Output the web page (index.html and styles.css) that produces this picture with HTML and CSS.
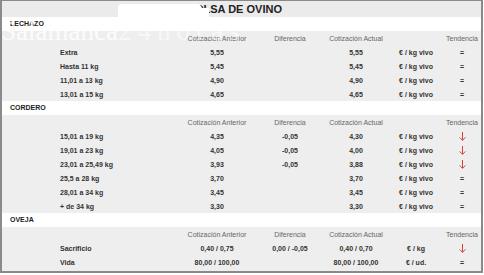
FILE: index.html
```html
<!DOCTYPE html>
<html lang="es">
<head>
<meta charset="utf-8">
<title>Bolsa de ovino</title>
<link rel="stylesheet" href="styles.css">
</head>
<body>
<div class="board">
  <div class="title">BOLSA DE OVINO</div>

  <div class="band">LECHAZO</div>
  <div class="row head"><span></span><span></span><span class="c">Cotización Anterior</span><span class="c">Diferencia</span><span class="c">Cotización Actual</span><span></span><span class="c">Tendencia</span></div>
  <div class="row"><span></span><span>Extra</span><span class="c">5,55</span><span class="c"></span><span class="c">5,55</span><span class="c">€ / kg vivo</span><span class="c">=</span></div>
  <div class="row"><span></span><span>Hasta 11 kg</span><span class="c">5,45</span><span class="c"></span><span class="c">5,45</span><span class="c">€ / kg vivo</span><span class="c">=</span></div>
  <div class="row"><span></span><span>11,01 a 13 kg</span><span class="c">4,90</span><span class="c"></span><span class="c">4,90</span><span class="c">€ / kg vivo</span><span class="c">=</span></div>
  <div class="row"><span></span><span>13,01 a 15 kg</span><span class="c">4,65</span><span class="c"></span><span class="c">4,65</span><span class="c">€ / kg vivo</span><span class="c">=</span></div>

  <div class="band">CORDERO</div>
  <div class="row head"><span></span><span></span><span class="c">Cotización Anterior</span><span class="c">Diferencia</span><span class="c">Cotización Actual</span><span></span><span class="c">Tendencia</span></div>
  <div class="row"><span></span><span>15,01 a 19 kg</span><span class="c">4,35</span><span class="c">-0,05</span><span class="c">4,30</span><span class="c">€ / kg vivo</span><span class="c"><svg class="down" viewBox="0 0 7 9" width="7" height="9"><path d="M3.5 0V8.3M0.6 5.4L3.5 8.3L6.4 5.4"/></svg></span></div>
  <div class="row"><span></span><span>19,01 a 23 kg</span><span class="c">4,05</span><span class="c">-0,05</span><span class="c">4,00</span><span class="c">€ / kg vivo</span><span class="c"><svg class="down" viewBox="0 0 7 9" width="7" height="9"><path d="M3.5 0V8.3M0.6 5.4L3.5 8.3L6.4 5.4"/></svg></span></div>
  <div class="row"><span></span><span>23,01 a 25,49 kg</span><span class="c">3,93</span><span class="c">-0,05</span><span class="c">3,88</span><span class="c">€ / kg vivo</span><span class="c"><svg class="down" viewBox="0 0 7 9" width="7" height="9"><path d="M3.5 0V8.3M0.6 5.4L3.5 8.3L6.4 5.4"/></svg></span></div>
  <div class="row"><span></span><span>25,5 a 28 kg</span><span class="c">3,70</span><span class="c"></span><span class="c">3,70</span><span class="c">€ / kg vivo</span><span class="c">=</span></div>
  <div class="row"><span></span><span>28,01 a 34 kg</span><span class="c">3,45</span><span class="c"></span><span class="c">3,45</span><span class="c">€ / kg vivo</span><span class="c">=</span></div>
  <div class="row"><span></span><span>+ de 34 kg</span><span class="c">3,30</span><span class="c"></span><span class="c">3,30</span><span class="c">€ / kg vivo</span><span class="c">=</span></div>

  <div class="band">OVEJA</div>
  <div class="row head"><span></span><span></span><span class="c">Cotización Anterior</span><span class="c">Diferencia</span><span class="c">Cotización Actual</span><span></span><span class="c">Tendencia</span></div>
  <div class="row"><span></span><span>Sacrificio</span><span class="c">0,40 / 0,75</span><span class="c">0,00 / -0,05</span><span class="c">0,40 / 0,70</span><span class="c">€ / kg</span><span class="c"><svg class="down" viewBox="0 0 7 9" width="7" height="9"><path d="M3.5 0V8.3M0.6 5.4L3.5 8.3L6.4 5.4"/></svg></span></div>
  <div class="row"><span></span><span>Vida</span><span class="c">80,00 / 100,00</span><span class="c"></span><span class="c">80,00 / 100,00</span><span class="c">€ / ud.</span><span class="c">=</span></div>

  <div class="logo-blob"></div>
  <div class="logo-tail"></div>
  <div class="watermark"><span class="wm-a">Salamanca</span><span class="wm-b">24horas</span></div>
</div>
</body>
</html>
```

FILE: styles.css
```css
html, body {
  margin: 0;
  padding: 0;
  background: #ffffff;
}

body {
  font-family: "Liberation Sans", Arial, sans-serif;
  color: #333333;
}

.board {
  position: relative;
  width: 479px;
  border: 1px solid #8a8a8a;
  border-left-width: 2px;
  border-right-width: 2px;
  border-bottom-width: 2px;
  background: #eeeeee;
  padding-bottom: 2px;
  overflow: hidden;
}

.title {
  height: 16px;
  line-height: 16px;
  text-align: center;
  padding-right: 14px;
  font-size: 11px;
  font-weight: bold;
  color: #222222;
  background: #ebebeb;
}

.band {
  height: 14px;
  line-height: 14px;
  padding-left: 8px;
  background: #ffffff;
  font-size: 7px;
  font-weight: bold;
  color: #222222;
}

.row {
  display: grid;
  grid-template-columns: 58px 120px 74px 72px 60px 60px 32px;
  height: 14px;
  align-items: center;
  font-size: 7px;
  font-weight: bold;
  color: #333333;
  white-space: nowrap;
}

.row > span {
  display: flex;
  align-items: center;
  height: 14px;
}

.row > .c {
  justify-content: center;
}

.row.head {
  font-weight: normal;
  color: #666666;
}

.down {
  display: block;
  fill: none;
  stroke: #d6403a;
  stroke-width: 1;
}

.logo-blob {
  position: absolute;
  left: 116px;
  top: 3px;
  width: 84px;
  height: 14px;
  background: #ffffff;
  border-radius: 4px 5px 0 0;
}

.logo-tail {
  position: absolute;
  left: 199px;
  top: 7px;
  width: 8px;
  height: 10px;
  background: #ffffff;
}

.watermark {
  position: absolute;
  left: -1px;
  top: 15px;
  font-family: "Liberation Serif", "Times New Roman", serif;
  font-size: 27px;
  line-height: 30px;
  color: #ffffff;
  white-space: nowrap;
  pointer-events: none;
}

.wm-a {
  opacity: 0.85;
}

.wm-b {
  opacity: 0.55;
  letter-spacing: 6px;
}
```
